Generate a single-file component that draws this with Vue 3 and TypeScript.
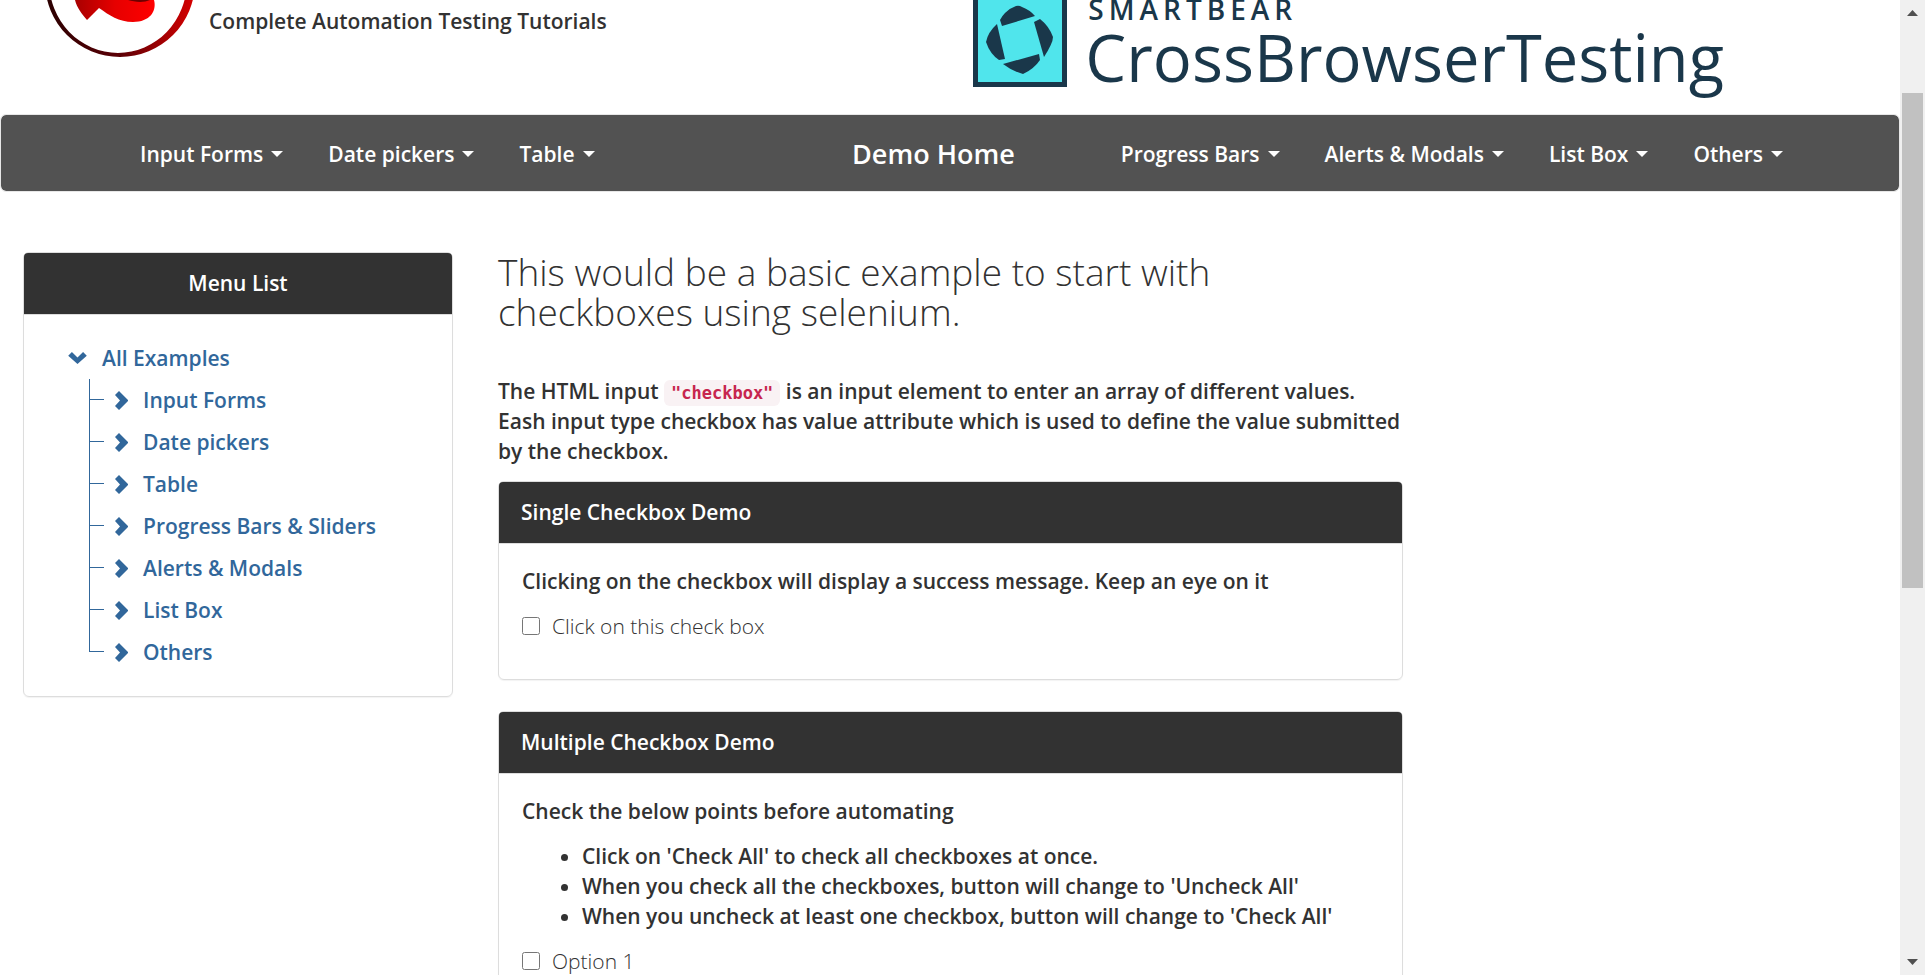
<script setup lang="ts">
import { ref } from 'vue'

const leftNav: string[] = ['Input Forms', 'Date pickers', 'Table']
const rightNav: string[] = ['Progress Bars', 'Alerts & Modals', 'List Box', 'Others']
const menuItems: string[] = [
  'Input Forms',
  'Date pickers',
  'Table',
  'Progress Bars & Sliders',
  'Alerts & Modals',
  'List Box',
  'Others',
]
const points: string[] = [
  "Click on 'Check All' to check all checkboxes at once.",
  "When you check all the checkboxes, button will change to 'Uncheck All'",
  "When you uncheck at least one checkbox, button will change to 'Check All'",
]

const single = ref(false)
const optionOne = ref(false)
</script>

<template>
  <div class="window">
    <div class="page">
      <header class="banner">
        <svg class="emblem" viewBox="45 0 150 58" aria-hidden="true">
          <defs>
            <linearGradient id="ring" x1="0" y1="0" x2="1" y2="0">
              <stop offset="0" stop-color="#2a0000" />
              <stop offset="0.5" stop-color="#5c0006" />
              <stop offset="1" stop-color="#d80000" />
            </linearGradient>
            <linearGradient id="ribbon" x1="0" y1="0" x2="1" y2="0">
              <stop offset="0" stop-color="#a80000" />
              <stop offset="0.5" stop-color="#e60000" />
              <stop offset="1" stop-color="#ff0000" />
            </linearGradient>
          </defs>
          <path
            fill="url(#ring)"
            fill-rule="evenodd"
            d="M45 -18a75 75 0 1 0 150 0a75 75 0 1 0 -150 0ZM49 -19a69 72 0 1 0 138 0a69 72 0 1 0 -138 0Z"
          />
          <path fill="url(#ribbon)" d="M75 0C77 8 82 14 87 20L99 8C109 15 119 22 133 22C150 22 157 11 154 0Z" />
          <path fill="#6e0000" d="M128 0C134 2 144 3 150 0Z" />
        </svg>
        <p class="tagline">Complete Automation Testing Tutorials</p>

        <a class="partner" href="#">
          <svg class="partner-mark" viewBox="973 0 94 87" aria-hidden="true">
            <path fill="#1a374a" d="M973 0H1067V87H973Z" />
            <path fill="#50e5ec" d="M978 0H1062V82H978Z" />
            <g fill="#1a374a">
              <path d="M1016 6Q1019 5 1022 7Q1030 10 1035 16L1002 26L1000 20Q1002 16 1005 13Q1010 8 1016 6Z" />
              <path d="M1034 22L1040 19Q1049 26 1053 37Q1053 43 1044 57Z" />
              <path d="M1039 54L1040 60Q1034 69 1023 74Q1012 71 1003 64Z" />
              <path d="M997 24L1005 59L999 60Q990 54 986 42Q988 32 997 24Z" />
            </g>
          </svg>
          <span class="partner-words">
            <span class="partner-owner">SMARTBEAR</span>
            <span class="partner-name">CrossBrowserTesting</span>
          </span>
        </a>
      </header>

      <nav class="navbar">
        <ul class="nav-group">
          <li v-for="item in leftNav" :key="item">
            <a href="#" class="nav-link">{{ item }}<span class="caret"></span></a>
          </li>
        </ul>
        <a class="home" href="#">Demo Home</a>
        <ul class="nav-group">
          <li v-for="item in rightNav" :key="item">
            <a href="#" class="nav-link">{{ item }}<span class="caret"></span></a>
          </li>
        </ul>
      </nav>

      <div class="columns">
        <aside class="column">
          <section class="panel">
            <h2 class="panel-title centered">Menu List</h2>
            <div class="tree">
              <a href="#" class="tree-root">
                <svg class="chevron-down" viewBox="0 0 20 14" aria-hidden="true">
                  <path fill="#31679b" d="M4 0L10 6L16 0L20 4L10 13L0 4Z" />
                </svg>
                All Examples
              </a>
              <ul class="tree-list">
                <li v-for="item in menuItems" :key="item" class="tree-item">
                  <span class="branch"></span>
                  <a href="#" class="tree-link">
                    <svg class="chevron-right" viewBox="0 0 13 19" aria-hidden="true">
                      <path fill="#31679b" d="M4 0L13 9L13 10L4 19L0 15L5 9.500L0 4Z" />
                    </svg>
                    {{ item }}
                  </a>
                </li>
              </ul>
            </div>
          </section>
        </aside>

        <main class="column">
          <h1 class="headline">This would be a basic example to start with checkboxes using selenium.</h1>
          <p class="intro">
            The HTML input <code>"checkbox"</code> is an input element to enter an array of different values. Eash
            input type checkbox has value attribute which is used to define the value submitted by the checkbox.
          </p>

          <section class="panel">
            <h2 class="panel-title">Single Checkbox Demo</h2>
            <div class="panel-body">
              <p>Clicking on the checkbox will display a success message. Keep an eye on it</p>
              <label class="check"><input v-model="single" type="checkbox" />Click on this check box</label>
            </div>
          </section>

          <section class="panel">
            <h2 class="panel-title">Multiple Checkbox Demo</h2>
            <div class="panel-body">
              <p>Check the below points before automating</p>
              <ul class="points">
                <li v-for="point in points" :key="point">{{ point }}</li>
              </ul>
              <label class="check"><input v-model="optionOne" type="checkbox" />Option 1</label>
            </div>
          </section>
        </main>
      </div>
    </div>

    <div class="scrollbar" aria-hidden="true">
      <svg class="scroll-arrow" viewBox="0 0 25 25"><path fill="#505050" d="M12.500 10L18 16H7Z" /></svg>
      <div class="scroll-track"><div class="scroll-thumb"></div></div>
      <svg class="scroll-arrow" viewBox="0 0 25 25"><path fill="#505050" d="M7 9H18L12.500 15Z" /></svg>
    </div>
  </div>
</template>

<style>
body {
  margin: 0;
  background: #fff;
}
</style>

<style scoped>
.window {
  display: flex;
  height: 100vh;
  overflow: hidden;
  color: #323232;
  font-family: "Open Sans", "Noto Sans", sans-serif;
  font-size: 21px;
  font-weight: 600;
  line-height: 30px;
}

.window *,
.window {
  box-sizing: border-box;
}

.page {
  flex: 1;
  min-width: 0;
}

a {
  color: inherit;
  text-decoration: none;
}

ul {
  margin: 0;
  padding: 0;
  list-style: none;
}

p {
  margin: 0;
}

.banner {
  display: flex;
  align-items: flex-start;
  height: 114px;
  overflow: hidden;
  padding-left: 45px;
}

.emblem {
  width: 150px;
  height: 58px;
}

.tagline {
  margin: 6px 0 0 14px;
}

.partner {
  display: flex;
  gap: 18px;
  margin-left: auto;
  margin-right: 176px;
  color: #1a374a;
}

.partner-mark {
  width: 94px;
  height: 87px;
}

.partner-words {
  display: flex;
  flex-direction: column;
  margin-top: -6px;
}

.partner-owner {
  padding-left: 3px;
  font-size: 28px;
  letter-spacing: 5px;
}

.partner-name {
  font-size: 65px;
  font-weight: 400;
  line-height: 66px;
}

.navbar {
  display: flex;
  align-items: center;
  padding: 24px 116px 22px 139px;
  border: 1px solid #e7e7e7;
  border-radius: 6px;
  background: #525252;
  background-clip: padding-box;
  color: #fff;
}

.nav-group {
  display: flex;
  gap: 45px;
}

.nav-link {
  display: flex;
  align-items: center;
  gap: 8px;
}

.caret {
  border-top: 6px solid #fff;
  border-right: 6px solid transparent;
  border-left: 6px solid transparent;
}

.home {
  margin-left: auto;
  margin-right: 106px;
  font-size: 27px;
}

.columns {
  display: grid;
  grid-template-columns: 1fr 2fr 1fr;
  padding-top: 60px;
}

.column {
  padding: 0 22px 0 23px;
}

.panel {
  margin-bottom: 31px;
  border: 1px solid #ddd;
  border-radius: 6px;
  box-shadow: 0 1px 1px rgba(0, 0, 0, 0.05);
}

.panel-title {
  margin: 0;
  padding: 15px 22px 16px;
  border-bottom: 1px solid #ddd;
  border-radius: 4px 4px 0 0;
  background: #323232;
  background-clip: padding-box;
  color: #fff;
  font-size: 21px;
  font-weight: 600;
}

.centered {
  text-align: center;
}

.tree {
  padding: 22px 22px 23px 44px;
  color: #31679b;
  line-height: 42px;
}

.tree-root {
  display: flex;
  align-items: center;
  gap: 15px;
}

.chevron-down {
  width: 19px;
  height: 13px;
}

.tree-list {
  padding-left: 21px;
}

.tree-item {
  display: flex;
  gap: 11px;
}

.branch {
  width: 15px;
  background-image: linear-gradient(#31679b, #31679b), linear-gradient(#31679b, #31679b);
  background-repeat: no-repeat;
  background-position: 0 0, 0 20px;
  background-size: 1px 100%, 15px 1px;
}

.tree-item:last-child .branch {
  background-size: 1px 21px, 15px 1px;
}

.tree-link {
  display: flex;
  align-items: center;
  gap: 15px;
}

.chevron-right {
  width: 13px;
  height: 19px;
}

.headline {
  margin: 0 0 44px;
  font-size: 37px;
  font-weight: 300;
  line-height: 40px;
}

.intro {
  margin-bottom: 15px;
}

code {
  padding: 3px 7px;
  border-radius: 6px;
  background: #f9f2f4;
  color: #c7254e;
  font-family: "DejaVu Sans Mono", monospace;
  font-size: 17px;
  font-weight: 700;
  line-height: 20px;
}

.panel-body {
  padding: 22px 23px 38px;
}

.panel-body p,
.points {
  margin-bottom: 15px;
}

.points {
  padding-left: 60px;
  list-style: disc;
}

.check {
  display: flex;
  align-items: center;
  gap: 12px;
  font-weight: 300;
}

.check input {
  width: 18px;
  height: 18px;
  margin: 0;
}

.scrollbar {
  display: flex;
  flex-direction: column;
  width: 25px;
  background: #f0f0f0;
}

.scroll-arrow {
  width: 25px;
  height: 25px;
}

.scroll-track {
  display: grid;
  flex: 1;
  grid-template-rows: 68fr 495fr 362fr;
  padding: 0 2px;
}

.scroll-thumb {
  grid-row: 2;
  background: #c1c1c1;
}
</style>
